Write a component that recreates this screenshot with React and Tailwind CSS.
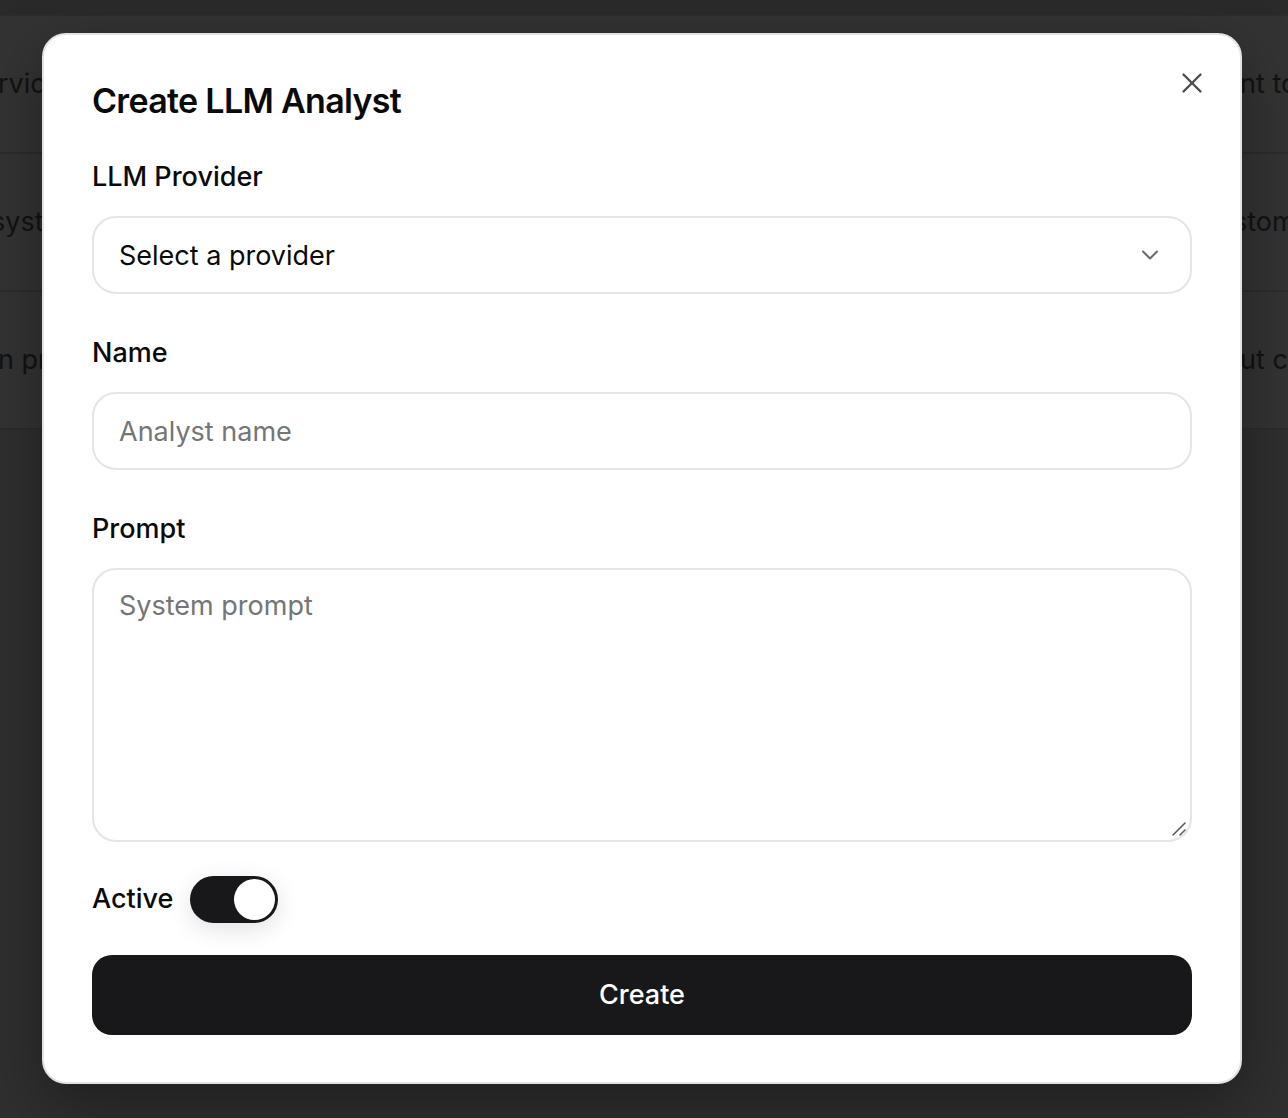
import React from "react";

const rows = [
  { left: "rvices and", right: "nt to keep", off: "-ml-[2px]" },
  { left: "system check", right: "stomers", off: "-ml-[9px]" },
  { left: "n prompt", right: "ut created", off: "-ml-[2px]" },
];

function Chevron() {
  return (
    <svg width="28" height="28" viewBox="0 0 24 24" fill="none" stroke="#6b6b6b" strokeWidth="1.8" strokeLinecap="round" strokeLinejoin="round">
      <path d="m6 9 6 6 6-6" />
    </svg>
  );
}

function CloseIcon() {
  return (
    <svg width="34" height="34" viewBox="0 0 24 24" fill="none" stroke="#4a4a4a" strokeWidth="1.6" strokeLinecap="round" strokeLinejoin="round">
      <path d="M18 6 6 18" />
      <path d="m6 6 12 12" />
    </svg>
  );
}

export default function App() {
  return (
    <div
      className="relative w-[1288px] h-[1118px] overflow-hidden bg-[#2f2f2f]"
      style={{ fontFamily: "Inter, 'Noto Sans', sans-serif" }}
    >
      {/* background table under overlay */}
      <div className="flex flex-col">
        <div className="h-[16px] bg-[#2a2a2a] border-b border-[#2d2d2d]" />
        {rows.map((r, i) => (
          <div key={i} className="h-[138px] flex items-center bg-[#333333] border-b-2 border-[#2c2c2c] text-[27px] text-[#121212]">
            <div className={"w-[1242px] shrink-0 overflow-hidden whitespace-nowrap " + r.off}>{r.left}</div>
            <div className="whitespace-nowrap">{r.right}</div>
          </div>
        ))}
      </div>

      {/* modal */}
      <div className="absolute left-[42px] top-[33px] w-[1200px] bg-white border-2 border-[#e3e3e3] rounded-[24px] shadow-[0_20px_60px_rgba(0,0,0,0.35)] px-[48px] pt-[46px] pb-[47px]">
        <button className="absolute right-[31px] top-[31px] w-[34px] h-[34px] flex items-center justify-center">
          <CloseIcon />
        </button>
        <h2 className="text-[34px] leading-[40px] font-semibold tracking-[-0.02em] text-[#0a0a0a]">Create LLM Analyst</h2>

        <div className="mt-[38px] text-[27px] leading-[36px] font-medium text-[#0a0a0a]">LLM Provider</div>
        <div className="mt-[21px] h-[78px] rounded-[24px] border-2 border-[#e5e5e5] flex items-center justify-between pl-[25px] pr-[26px]">
          <span className="text-[27px] leading-[36px] pt-[2px] text-[#0a0a0a]">Select a provider</span>
          <Chevron />
        </div>

        <div className="mt-[41px] text-[27px] leading-[36px] font-medium text-[#0a0a0a]">Name</div>
        <div className="mt-[21px] h-[78px] rounded-[24px] border-2 border-[#e5e5e5] flex items-center pl-[25px]">
          <span className="text-[27px] leading-[36px] pt-[2px] text-[#757575]">Analyst name</span>
        </div>

        <div className="mt-[41px] text-[27px] leading-[36px] font-medium text-[#0a0a0a]">Prompt</div>
        <div className="relative mt-[21px] h-[274px] rounded-[24px] border-2 border-[#e5e5e5] pl-[25px] pt-[16px]">
          <span className="text-[27px] text-[#757575]">System prompt</span>
          <svg className="absolute right-[4px] bottom-[4px]" width="14" height="14" viewBox="0 0 14 14" stroke="#555" strokeWidth="1.5" strokeLinecap="round">
            <path d="M1 13 13 1" />
            <path d="M8 13 13 8" />
          </svg>
        </div>

        <div className="mt-[33px] flex items-center gap-[17px] h-[48px]">
          <span className="text-[27px] font-medium text-[#0a0a0a]">Active</span>
          <div className="w-[88px] h-[47px] rounded-full bg-[#18181b] flex items-center justify-end pr-[3px] shadow-[0_6px_24px_rgba(0,0,0,0.12)]">
            <div className="w-[41px] h-[41px] rounded-full bg-white" />
          </div>
        </div>

        <button className="mt-[32px] w-full h-[80px] rounded-[20px] bg-[#18181b] text-white text-[27px] font-medium flex items-center justify-center">
          Create
        </button>
      </div>
    </div>
  );
}
